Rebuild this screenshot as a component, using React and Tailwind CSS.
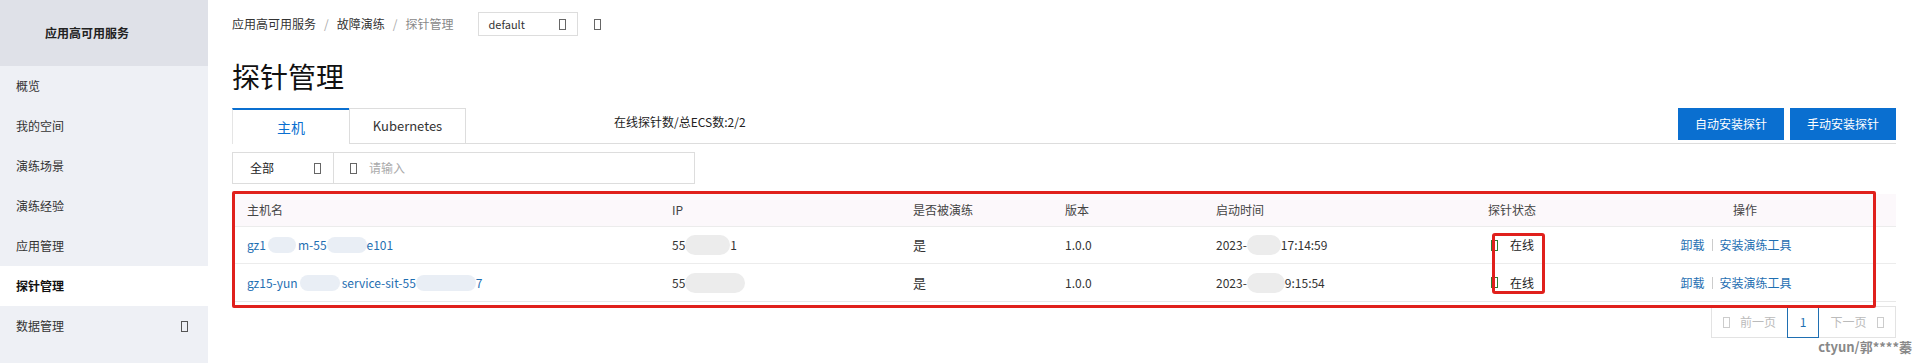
import React from "react";

const menu = ["概览", "我的空间", "演练场景", "演练经验", "应用管理", "探针管理", "数据管理"];

const rows = [
  { host: "gz1", hostTail: "m-55", hostEnd: "e101", ip: "55", ipEnd: "1", time: "17:14:59" },
  { host: "gz15-yun", hostTail: "service-sit-55", hostEnd: "7", ip: "55", ipEnd: "", time: "9:15:54" },
];

function Tofu({ className = "" }) {
  return <span className={"inline-block w-[7px] h-[11px] border " + className} />;
}

function Blur({ w }) {
  return <span className={"inline-block h-[16px] rounded-full bg-[#e9eef5] align-middle " + w} />;
}

export default function App() {
  return (
    <div
      className="flex w-[1916px] h-[363px] bg-white text-[12px] text-[#333] overflow-hidden"
      style={{ fontFamily: '"Noto Sans CJK SC", "Noto Sans", sans-serif' }}
    >
      {/* sidebar */}
      <div className="w-[208px] shrink-0 bg-[#eef0f5] flex flex-col">
        <div className="h-[66px] bg-[#dfe1e8] flex items-center pl-[45px] font-bold text-[12px] text-[#222]">
          应用高可用服务
        </div>
        {menu.map((m) => (
          <div
            key={m}
            className={
              "h-[40px] flex items-center justify-between pl-[16px] pr-[20px] text-[12px] " +
              (m === "探针管理" ? "bg-white font-bold text-[#111]" : "text-[#333]")
            }
          >
            <span>{m}</span>
            {m === "数据管理" && <Tofu className="border-[#555]" />}
          </div>
        ))}
      </div>

      {/* main */}
      <div className="flex-1 pl-[24px] pr-[20px]">
        <div className="h-[48px] flex items-center gap-[8px] text-[12px]">
          <span className="text-[#333]">应用高可用服务</span>
          <span className="text-[#aaa]">/</span>
          <span className="text-[#333]">故障演练</span>
          <span className="text-[#aaa]">/</span>
          <span className="text-[#888]">探针管理</span>
          <div className="ml-[17px] w-[100px] h-[24px] border border-[#ddd] flex items-center justify-between px-[9px] text-[11px] text-[#333]">
            <span>default</span>
            <Tofu className="border-[#666] mr-[2px]" />
          </div>
          <Tofu className="border-[#666] ml-[8px]" />
        </div>

        <div className="h-[60px] flex items-center text-[28px] text-[#111] leading-none pb-[4px]">探针管理</div>

        {/* tabs row */}
        <div className="flex items-start border-b border-[#ddd] h-[36px]">
          <div className="w-[117px] h-[36px] border-t-2 border-t-[#0a6fd0] border-l border-l-[#e5e5e5] bg-white flex items-center justify-center text-[14px] text-[#0a6fd0] -mb-px">
            主机
          </div>
          <div className="w-[117px] h-[35px] border border-[#ddd] border-b-0 flex items-center justify-center text-[13px] text-[#333]">
            Kubernetes
          </div>
          <div className="ml-[148px] h-[28px] flex items-center text-[12px] text-[#222]">在线探针数/总ECS数:2/2</div>
          <div className="ml-auto flex gap-[6px]">
            <button className="w-[106px] h-[32px] bg-[#0a6fd0] text-white text-[12px]">自动安装探针</button>
            <button className="w-[106px] h-[32px] bg-[#0a6fd0] text-white text-[12px]">手动安装探针</button>
          </div>
        </div>

        {/* filter */}
        <div className="mt-[8px] flex w-[463px] h-[32px] border border-[#ddd]">
          <div className="w-[101px] border-r border-[#ddd] flex items-center justify-between pl-[17px] pr-[12px] text-[12px] text-[#222]">
            <span>全部</span>
            <Tofu className="border-[#666]" />
          </div>
          <div className="flex items-center gap-[12px] pl-[16px] text-[12px] text-[#aaa]">
            <Tofu className="border-[#666]" />
            <span>请输入</span>
          </div>
        </div>

        {/* table */}
        <div className="relative mt-[7px] pt-[3px]">
          <div className="border-b border-[#e8e8e8]">
            <div className="grid grid-cols-[440px_241px_152px_151px_272px_1fr] h-[33px] items-center bg-[#fcf8fb] border-b border-[#ececec] text-[12px] text-[#444]">
              <div className="pl-[15px]">主机名</div>
              <div className="pl-[0px]">IP</div>
              <div>是否被演练</div>
              <div>版本</div>
              <div>启动时间</div>
              <div className="flex">
                <span className="w-[150px]">探针状态</span>
                <span className="flex-1 text-center pr-[44px]">操作</span>
              </div>
            </div>
            {rows.map((r, i) => (
              <div
                key={i}
                className={
                  "grid grid-cols-[440px_241px_152px_151px_272px_1fr] h-[37px] items-center text-[12px] text-[#333] " +
                  (i === 0 ? "border-b border-[#ececec]" : "")
                }
              >
                <div className="pl-[15px] text-[#1f6fb2] flex items-center">
                  <span>{r.host}</span>
                  <Blur w={i === 0 ? "w-[28px] mx-[2px]" : "w-[40px] mx-[2px]"} />
                  <span>{r.hostTail}</span>
                  <Blur w={i === 0 ? "w-[40px]" : "w-[60px]"} />
                  <span>{r.hostEnd}</span>
                </div>
                <div className="flex items-center">
                  <span>{r.ip}</span>
                  <span className={"inline-block h-[20px] rounded-full bg-[#ececec] " + (i === 0 ? "w-[45px]" : "w-[60px]")} />
                  <span>{r.ipEnd}</span>
                </div>
                <div className="text-[13px]">是</div>
                <div>1.0.0</div>
                <div className="flex items-center">
                  <span>2023-</span>
                  <span className={"inline-block h-[20px] rounded-full bg-[#ececec] " + (i === 0 ? "w-[34px]" : "w-[38px]")} />
                  <span>{r.time}</span>
                </div>
                <div className="flex items-center">
                  <span className="w-[150px] flex items-center gap-[12px] pl-[3px]">
                    <Tofu className="border-[#2e7d32]" />
                    <span className="text-[12px] text-[#222]">在线</span>
                  </span>
                  <span className="flex-1 flex items-center justify-center pr-[62px] text-[#1f6fb2]">
                    <span>卸载</span>
                    <span className="mx-[7px] w-px h-[12px] bg-[#ccc]" />
                    <span>安装演练工具</span>
                  </span>
                </div>
              </div>
            ))}
          </div>

          {/* annotation boxes */}
          <div className="absolute left-0 top-0 w-[1644px] h-[117px] border-[3px] border-[#e0201c] rounded-[2px] pointer-events-none" />
          <div className="absolute left-[1260px] top-[42px] w-[53px] h-[61px] border-[3px] border-[#e0201c] rounded-[3px] pointer-events-none" />
        </div>

        {/* pagination */}
        <div className="flex justify-end mt-[4px]">
          <div className="flex h-[32px] border border-[#e3e3e3] text-[12px] text-[#bbb]">
            <div className="w-[75px] flex items-center justify-center gap-[10px]">
              <Tofu className="border-[#ccc]" />
              <span>前一页</span>
            </div>
            <div className="w-[32px] border border-[#1f6fb2] -my-px flex items-center justify-center text-[#1f6fb2]">1</div>
            <div className="w-[76px] flex items-center justify-center gap-[10px]">
              <span>下一页</span>
              <Tofu className="border-[#ccc]" />
            </div>
          </div>
        </div>
        <div className="flex justify-end mt-[2px] mr-[-20px] pr-[4px]">
          <span className="text-[13px] font-semibold text-[#888] leading-none">ctyun/郭****蓁</span>
        </div>
      </div>
    </div>
  );
}
